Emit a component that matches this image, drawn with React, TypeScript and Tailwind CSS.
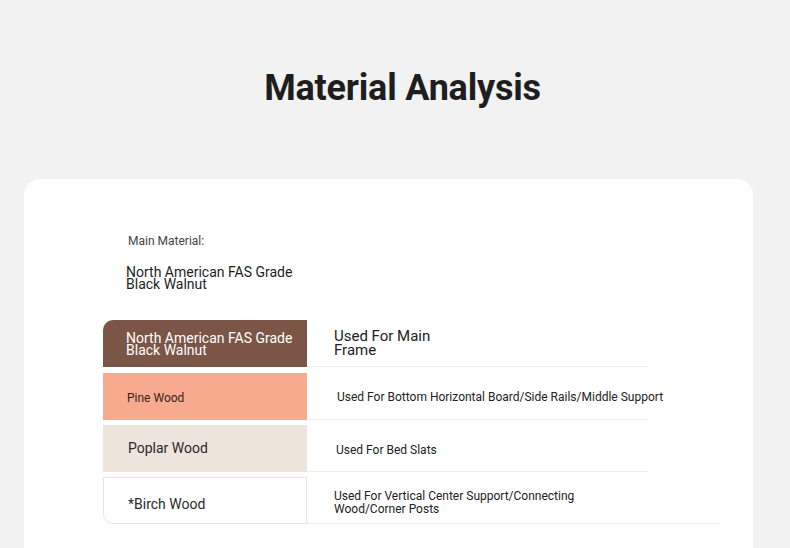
import React from 'react';

type Row = {
  name: string;
  use: string;
  rowClass: string;
  cellClass: string;
  nameClass: string;
  useClass: string;
  rightClass: string;
};

const rows: Row[] = [
  {
    name: 'North American FAS Grade Black Walnut',
    use: 'Used For Main Frame',
    rowClass: '',
    cellClass: 'bg-[#7b5646] rounded-tl-[10px] text-white',
    nameClass: 'text-[14px] leading-[12px] w-[195px] pl-[23px]',
    useClass: 'text-[15px] leading-[14px] w-[140px] pl-[27px] text-[#222]',
    rightClass: 'w-[341px]',
  },
  {
    name: 'Pine Wood',
    use: 'Used For Bottom Horizontal Board/Side Rails/Middle Support',
    rowClass: 'mt-[1px]',
    cellClass: 'bg-[#f7aa8e] text-[#3a1f14] pt-[2px]',
    nameClass: 'text-[12px] pl-[24px]',
    useClass: 'text-[12px] pl-[30px] text-[#222] whitespace-nowrap',
    rightClass: 'w-[341px] pt-[1px]',
  },
  {
    name: 'Poplar Wood',
    use: 'Used For Bed Slats',
    rowClass: '',
    cellClass: 'bg-[#ede4dc] text-[#2a2a2a]',
    nameClass: 'text-[14px] pl-[25px]',
    useClass: 'text-[12px] pl-[29px] text-[#222]',
    rightClass: 'w-[341px] pt-[3px]',
  },
  {
    name: '*Birch Wood',
    use: 'Used For Vertical Center Support/Connecting Wood/Corner Posts',
    rowClass: '',
    cellClass: 'bg-white border border-[#e6e6e6] rounded-bl-[10px] text-[#2a2a2a] pt-[8px]',
    nameClass: 'text-[14px] pl-[24px]',
    useClass: 'text-[12px] leading-[13px] w-[275px] pl-[27px] text-[#222]',
    rightClass: 'w-[413px] pt-[5px]',
  },
];

export default function App() {
  return (
    <div
      className="w-[790px] h-[548px] overflow-hidden bg-[#f3f2f2] flex flex-col"
      style={{ fontFamily: 'Roboto, "Liberation Sans", sans-serif' }}
    >
      {/* Title */}
      <h1 className="mt-[66px] h-[44px] pl-[15px] text-center text-[36px] leading-[44px] font-bold text-[#1e1e1e] tracking-[-0.2px]">
        Material Analysis
      </h1>

      {/* Card */}
      <div className="mt-[69px] ml-[24px] w-[729px] flex-1 bg-white rounded-t-[16px] pl-[79px] pt-[55px]">
        <p className="pl-[25px] text-[12px] leading-[14px] text-[#444]">Main Material:</p>
        <p className="mt-[18px] pl-[23px] w-[200px] text-[14px] leading-[12px] text-[#1e1e1e]">
          North American FAS Grade Black Walnut
        </p>

        <div className="mt-[30px] flex flex-col gap-[5px]">
          {rows.map((r) => (
            <div key={r.name} className={`flex h-[47px] ${r.rowClass}`}>
              <div className={`w-[204px] flex items-center ${r.cellClass}`}>
                <span className={r.nameClass}>{r.name}</span>
              </div>
              <div className={`flex items-center border-b border-[#eeeeee] ${r.rightClass}`}>
                <span className={r.useClass}>{r.use}</span>
              </div>
            </div>
          ))}
        </div>
      </div>
    </div>
  );
}
